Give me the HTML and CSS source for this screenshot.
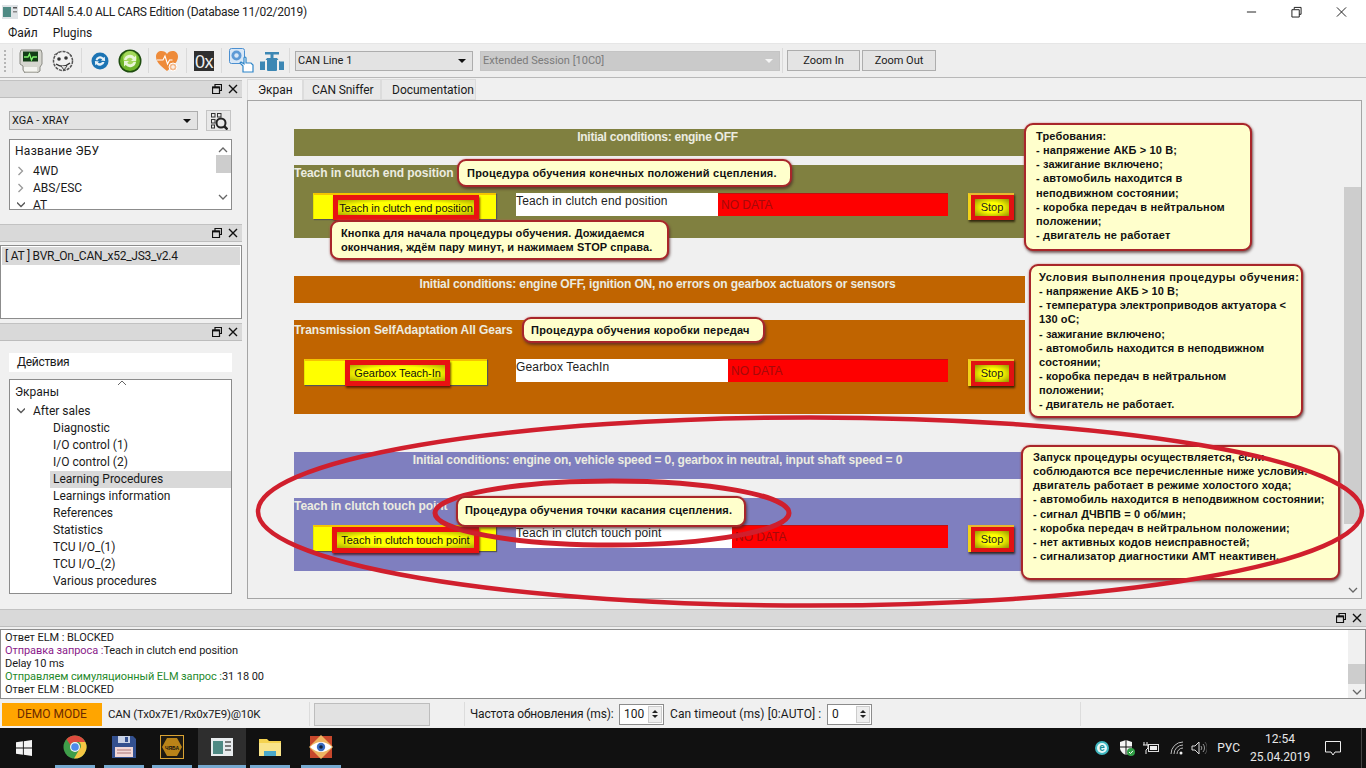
FILE: index.html
```html
<!DOCTYPE html>
<html lang="ru">
<head>
<meta charset="utf-8">
<title>DDT4All</title>
<link rel="stylesheet" href="styles.css">
</head>
<body>
<div class="app">
  <header class="titlebar">
    <svg class="app-icon" viewBox="0 0 16 14" width="16" height="14"><rect width="16" height="14" fill="#dfe3e6"/><rect x="1" y="2" width="8" height="10" fill="#4f8a84"/><rect x="11" y="2" width="4" height="1.5" fill="#555"/><rect x="11" y="6" width="4" height="1.5" fill="#888"/></svg>
    <span class="title-text">DDT4All 5.4.0 ALL CARS Edition (Database 11/02/2019)</span>
    <div class="win-controls">
      <svg viewBox="0 0 12 12" width="12" height="12"><path d="M1 6h10" stroke="#111" fill="none"/></svg>
      <svg viewBox="0 0 12 12" width="12" height="12"><path d="M3.5 3V1h7.500v7.500H9M1 3.500h8v8H1z" stroke="#111" fill="none"/></svg>
      <svg viewBox="0 0 12 12" width="12" height="12"><path d="M1 1l10 10M11 1L1 11" stroke="#111" fill="none"/></svg>
    </div>
  </header>
  <nav class="menubar"><span>Файл</span><span>Plugins</span></nav>

  <div class="toolbar">
    <div class="grip"></div>
    <div class="tsep"></div>
    <svg class="ti ti-monitor" viewBox="0 0 24 24" width="24" height="24"><path d="M2 1h20l1 3v11l-2 3v4l-3 2H6l-2-3v-4L1 15V4z" fill="#d6d6cf" stroke="#8b8b84"/><rect x="4" y="2.500" width="15" height="10" fill="#123d16"/><path d="M5 8h4l1.500-3 2 6 1.500-3h4" fill="none" stroke="#7df06a" stroke-width="1.300"/><rect x="5" y="18" width="13" height="4" fill="#f4f4f0"/></svg>
    <svg class="ti ti-face" viewBox="0 0 24 24" width="24" height="24"><circle cx="12" cy="12" r="9.500" fill="#f1f1f1" stroke="#555" stroke-width="1.500" stroke-dasharray="3 1"/><circle cx="8" cy="10" r="1.800" fill="#333"/><circle cx="15" cy="9" r="1.800" fill="#333"/><path d="M5 15q7 5 14-1" fill="none" stroke="#333" stroke-width="1.500"/><path d="M10 17l3 4 3-4" fill="#ddd" stroke="#444"/><path d="M3 6l5-3M16 3l5 4" stroke="#666"/></svg>
    <div class="tsep tsep-a"></div>
    <svg class="ti ti-sync" viewBox="0 0 18 18" width="18" height="18"><circle cx="9" cy="9" r="8.500" fill="#1c74b4"/><path d="M4.500 8a4.600 4.600 0 0 1 8-2.200l1.300-1.100.3 4.300-4.200-.4 1.300-1.100A2.800 2.800 0 0 0 6.400 8.500zM13.500 10a4.600 4.600 0 0 1-8 2.200l-1.300 1.100-.3-4.300 4.200.4-1.300 1.100a2.800 2.800 0 0 0 4.300-.5z" fill="#e8f2f8"/></svg>
    <svg class="ti ti-green" viewBox="0 0 24 24" width="24" height="24"><circle cx="12" cy="12" r="11.500" fill="#1f4d10"/><circle cx="12" cy="12" r="10" fill="#6fb52a"/><circle cx="12" cy="9" r="7" fill="#a5d85c"/><path d="M6 11a6 6 0 0 1 10.500-3l1.500-1.500V12h-5l1.800-1.800A3.600 3.600 0 0 0 8.500 11zM18 13a6 6 0 0 1-10.500 3L6 17.500V12h5l-1.800 1.800a3.600 3.600 0 0 0 6.300-.8z" fill="#e9f5d8"/></svg>
    <div class="tsep tsep-b"></div>
    <svg class="ti ti-heart" viewBox="0 0 24 22" width="24" height="22"><path d="M12 21C4 15 1 11 1 6.500 1 3 3.500 1 6.500 1 9 1 11 2.300 12 4c1-1.700 3-3 5.500-3C20.500 1 23 3 23 6.500 23 11 20 15 12 21z" fill="#ee8b3a"/><path d="M2 10h6l2-4 2.500 8 2-4h3" fill="none" stroke="#fff" stroke-width="1.100"/><circle cx="18" cy="17" r="4" fill="#f3b98d" stroke="#fff"/><path d="M16 17h4M18 15v4" stroke="#fff"/></svg>
    <div class="tsep tsep-c"></div>
    <div class="hexbtn">0x</div>
    <div class="tsep tsep-d"></div>
    <svg class="ti ti-gear" viewBox="0 0 25 26" width="25" height="26"><rect x="0.500" y="0.500" width="15" height="15" rx="2" fill="#d8e7f6" stroke="#4b8fd0"/><circle cx="7.500" cy="7.500" r="5" fill="#5d9ad6"/><circle cx="7.500" cy="7.500" r="2.200" fill="#d8e7f6"/><path d="M14 24v-6l-3-3 1-1 3 2v-6a1 1 0 0 1 2 0v5h5l2 2v7z" fill="#fff" stroke="#2f86c9" stroke-width="1.200"/></svg>
    <svg class="ti ti-valve" viewBox="0 0 24 22" width="24" height="22"><path d="M5 2h14v2.500h-5.500V8H17l2.500 3.500H24V20h-6l-2 1H8l-2-1H0v-8.500h4.500L7 8h3.500V4.500H5z" fill="#3c87b4"/><rect x="5" y="10" width="2" height="12" fill="#f0f0f0"/><rect x="17" y="10" width="2" height="12" fill="#f0f0f0"/></svg>
    <div class="tsep tsep-e"></div>
    <div class="combo combo-can"><span>CAN Line 1</span><i class="caret"></i></div>
    <div class="combo combo-session"><span>Extended Session [10C0]</span><i class="caret caret-off"></i></div>
    <div class="tsep tsep-f"></div>
    <button class="zoom zoom-in">Zoom In</button>
    <button class="zoom zoom-out">Zoom Out</button>
  </div>

  <div class="main">
    <aside class="left">
      <div class="dock-title first">
        <svg viewBox="0 0 10 10" width="10" height="10"><use href="#float"/></svg>
        <svg viewBox="0 0 10 10" width="10" height="10"><use href="#close"/></svg>
      </div>
      <div class="ecu-row">
        <div class="combo combo-ecu"><span>XGA - XRAY</span><i class="caret"></i></div>
        <div class="scan-btn">
          <svg viewBox="0 0 18 18" width="18" height="18"><g fill="none" stroke="#333"><rect x="1.500" y="1.500" width="3.500" height="3.500"/><rect x="7.500" y="1.500" width="3.500" height="3.500"/><rect x="1.500" y="7.500" width="3.500" height="3.500"/><rect x="1.500" y="13" width="3" height="3"/><circle cx="11" cy="11" r="4.500" stroke-width="2" stroke="#222"/><path d="M14 14l3.500 3.500" stroke-width="2.500" stroke="#222"/></g></svg>
        </div>
      </div>
      <div class="tree tree-ecu">
        <div class="tree-head">Название ЭБУ</div>
        <div class="tree-row"><svg class="chev" viewBox="0 0 8 10" width="8" height="10"><path d="M1.500 1l4 4-4 4" fill="none" stroke="#999" stroke-width="1.300"/></svg>4WD</div>
        <div class="tree-row"><svg class="chev" viewBox="0 0 8 10" width="8" height="10"><path d="M1.500 1l4 4-4 4" fill="none" stroke="#999" stroke-width="1.300"/></svg>ABS/ESC</div>
        <div class="tree-row"><svg class="chev" viewBox="0 0 8 10" width="8" height="10"><path d="M0 2.500l4 4 4-4" fill="none" stroke="#555" stroke-width="1.300"/></svg>AT</div>
        <div class="mini-scroll">
          <svg viewBox="0 0 10 6" width="10" height="6"><path d="M1 5l4-4 4 4" fill="none" stroke="#666" stroke-width="1.300"/></svg>
          <div class="mini-thumb"></div>
          <svg viewBox="0 0 10 6" width="10" height="6"><path d="M1 1l4 4 4-4" fill="none" stroke="#666" stroke-width="1.300"/></svg>
        </div>
      </div>
      <div class="dock-title second">
        <svg viewBox="0 0 10 10" width="10" height="10"><use href="#float"/></svg>
        <svg viewBox="0 0 10 10" width="10" height="10"><use href="#close"/></svg>
      </div>
      <div class="ecu-list"><div class="ecu-sel">[ AT ] BVR_On_CAN_x52_JS3_v2.4</div></div>
      <div class="dock-title third">
        <svg viewBox="0 0 10 10" width="10" height="10"><use href="#float"/></svg>
        <svg viewBox="0 0 10 10" width="10" height="10"><use href="#close"/></svg>
      </div>
      <div class="actions">Действия</div>
      <div class="tree tree-screens">
        <svg class="tree-up" viewBox="0 0 10 6" width="10" height="6"><path d="M1 5l4-4 4 4" fill="none" stroke="#666"/></svg>
        <div class="tree-head">Экраны</div>
        <div class="tree-row"><svg class="chev" viewBox="0 0 8 10" width="8" height="10"><path d="M0 2.500l4 4 4-4" fill="none" stroke="#555" stroke-width="1.300"/></svg>After sales</div>
        <div class="leaf">Diagnostic</div>
        <div class="leaf">I/O control (1)</div>
        <div class="leaf">I/O control (2)</div>
        <div class="leaf selected">Learning Procedures</div>
        <div class="leaf">Learnings information</div>
        <div class="leaf">References</div>
        <div class="leaf">Statistics</div>
        <div class="leaf">TCU I/O_(1)</div>
        <div class="leaf">TCU I/O_(2)</div>
        <div class="leaf">Various procedures</div>
      </div>
    </aside>

    <section class="center">
      <div class="tabs">
        <div class="tab active">Экран</div>
        <div class="tab">CAN Sniffer</div>
        <div class="tab">Documentation</div>
      </div>
      <div class="panel">
        <div class="canvas">
          <div class="band olive b1">Initial conditions: engine OFF</div>
          <div class="block olive k1"><span class="block-label">Teach in clutch end position</span></div>
          <div class="ybtn y1"></div>
          <div class="hl h1"><span>Teach in clutch end position</span></div>
          <div class="field f1">Teach in clutch end position</div>
          <div class="nodata n1">NO DATA</div>
          <div class="stop s1"><span>Stop</span></div>

          <div class="band orange b2">Initial conditions: engine OFF, ignition ON, no errors on gearbox actuators or sensors</div>
          <div class="block orange k2"><span class="block-label">Transmission SelfAdaptation All Gears</span></div>
          <div class="ybtn y2"></div>
          <div class="hl h2"><span>Gearbox Teach-In</span></div>
          <div class="field f2">Gearbox TeachIn</div>
          <div class="nodata n2">NO DATA</div>
          <div class="stop s2"><span>Stop</span></div>

          <div class="band purple b3">Initial conditions: engine on, vehicle speed = 0, gearbox in neutral, input shaft speed = 0</div>
          <div class="block purple k3"><span class="block-label">Teach in clutch touch point</span></div>
          <div class="ybtn y3"></div>
          <div class="hl h3"><span>Teach in clutch touch point</span></div>
          <div class="field f3">Teach in clutch touch point</div>
          <div class="nodata n3">NO DATA</div>
          <div class="stop s3"><span>Stop</span></div>
        </div>
        <div class="vscroll">
          <svg class="vs-down" viewBox="0 0 10 6" width="10" height="6"><path d="M1 1l4 4 4-4" fill="none" stroke="#666" stroke-width="1.300"/></svg>
        </div>
      </div>
    </section>
  </div>

  <div class="logdock">
    <div class="dock-title wide">
      <svg viewBox="0 0 10 10" width="10" height="10"><use href="#float"/></svg>
      <svg viewBox="0 0 10 10" width="10" height="10"><use href="#close"/></svg>
    </div>
    <div class="log">
      <div>Ответ ELM : BLOCKED</div>
      <div><span class="purple-t">Отправка запроса :</span>Teach in clutch end position</div>
      <div>Delay 10 ms</div>
      <div><span class="green-t">Отправляем симуляционный ELM запрос :</span>31 18 00</div>
      <div>Ответ ELM : BLOCKED</div>
      <div class="log-scroll">
        <div class="log-thumb"></div>
        <svg viewBox="0 0 10 6" width="10" height="6"><path d="M1 1l4 4 4-4" fill="none" stroke="#666" stroke-width="1.300"/></svg>
      </div>
    </div>
  </div>

  <div class="statusbar">
    <div class="demo">DEMO MODE</div>
    <div class="can-info">CAN (Tx0x7E1/Rx0x7E9)@10K</div>
    <div class="sep sep-a"></div>
    <div class="progress"></div>
    <div class="sep sep-b"></div>
    <span class="st-label">Частота обновления (ms):</span>
    <div class="spin"><span>100</span><div class="spin-btn"><i class="up"></i><i class="down"></i></div></div>
    <span class="st-label st-b">Can timeout (ms) [0:AUTO] :</span>
    <div class="spin"><span>0</span><div class="spin-btn"><i class="up"></i><i class="down"></i></div></div>
    <div class="sep sep-c"></div>
  </div>

  <footer class="taskbar">
    <svg class="winlogo" viewBox="0 0 16 16" width="16" height="16"><path d="M0 2.300l6.900-1v6.300H0zM7.800 1.200L16 0v7.600H7.800zM0 8.400h6.900v6.300l-6.900-1zM7.800 8.400H16V16l-8.200-1.200z" fill="#f4f4f4"/></svg>
    <div class="task t-chrome"><svg viewBox="0 0 24 24" width="24" height="24"><circle cx="12" cy="12" r="11.500" fill="#3f9e4a"/><path d="M12 .5A11.500 11.500 0 0 1 22.300 7H12a5 5 0 0 0-4.600 3L3.500 4.200A11.500 11.500 0 0 1 12 .5z" fill="#dd4b3e"/><path d="M22.300 7A11.500 11.500 0 0 1 11 23.500l5-8.500a5 5 0 0 0 0-8z" fill="#f6c644"/><circle cx="12" cy="12" r="5" fill="#f4f4f4"/><circle cx="12" cy="12" r="3.800" fill="#4b8bea"/></svg></div>
    <div class="task t-floppy"><svg viewBox="0 0 24 24" width="24" height="24"><path d="M0 1h21l3 3v19H0z" fill="#33508f"/><rect x="6" y="1" width="12" height="7" fill="#c8d2e6"/><rect x="13" y="2" width="3" height="5" fill="#33508f"/><rect x="3" y="12" width="18" height="10" fill="#f1d8d8"/><path d="M5 15h14M5 18h14" stroke="#a77"/></svg></div>
    <div class="task t-ecu"><svg viewBox="0 0 24 24" width="24" height="24"><rect x="0.500" y="0.500" width="23" height="23" fill="#1e1a12" stroke="#d8a233"/><path d="M7 3h10l5 9-5 9H7l-5-9z" fill="#b98318"/><text x="12" y="15" class="ecu-t">ЧЯБА</text></svg></div>
    <div class="task t-active"><svg viewBox="0 0 22 18" width="22" height="18"><rect width="22" height="18" fill="#e8ecee"/><rect x="2" y="3" width="10" height="13" fill="#4f8a84"/><path d="M14 4h6M14 8h6M14 12h6" stroke="#555" stroke-width="1.500"/></svg></div>
    <div class="task t-folder"><svg viewBox="0 0 22 18" width="22" height="18"><path d="M0 1h8l2 2h12v15H0z" fill="#f4d24f"/><path d="M0 5h22v13H0z" fill="#f9e48a"/><path d="M5 18v-5h12v5" fill="#4aa8c9"/></svg></div>
    <div class="task t-eye"><svg viewBox="0 0 24 24" width="24" height="24"><rect x="1" y="1" width="22" height="22" fill="#c8482c"/><path d="M12 0l12 12-12 12L0 12z" fill="#efb562"/><path d="M1 12q11-10 22 0-11 10-22 0z" fill="#fff"/><circle cx="12" cy="12" r="4.200" fill="#3a6cc0"/><circle cx="12" cy="12" r="1.800" fill="#123"/></svg></div>
    <div class="tray">
      <svg class="tr-eset" viewBox="0 0 14 14" width="14" height="14"><circle cx="7" cy="7" r="7" fill="#3fb7c0"/><circle cx="7" cy="7" r="5" fill="#e6f8f8"/><text x="7" y="10" class="eset-t">e</text></svg>
      <svg class="tr-shield" viewBox="0 0 16 16" width="16" height="16"><path d="M1 2l6-2 6 2v6c0 3-3 6-6 7-3-1-6-4-6-7z" fill="#f4f4f4"/><path d="M7 0v15M1 7h12" stroke="#111"/><circle cx="12" cy="12" r="4" fill="#2f9e44"/><path d="M10 12l1.500 1.500L14 10.800" stroke="#fff" fill="none"/></svg>
      <svg class="tr-batt" viewBox="0 0 18 12" width="18" height="12"><path d="M2 0v3M5 0v3M1 3h5v3L4 8v4" stroke="#eee" fill="none"/><rect x="6.500" y="2.500" width="10" height="7" stroke="#ddd" fill="none"/><rect x="8" y="4" width="7" height="4" fill="#eee"/></svg>
      <svg class="tr-wifi" viewBox="0 0 14 14" width="14" height="14"><g fill="none" stroke="#bbb"><path d="M1 13A12 12 0 0 1 13 1"/><path d="M4 13a9 9 0 0 1 9-9"/><path d="M7 13a6 6 0 0 1 6-6"/></g><circle cx="11" cy="12" r="1.500" fill="#eee"/></svg>
      <svg class="tr-vol" viewBox="0 0 16 14" width="16" height="14"><path d="M1 5h3l4-4v12L4 9H1z" fill="none" stroke="#ddd"/><path d="M10 5a3 3 0 0 1 0 4M12 3a6 6 0 0 1 0 8" fill="none" stroke="#999"/><path d="M14 1a9 9 0 0 1 0 12" fill="none" stroke="#555"/></svg>
      <span class="lang">РУС</span>
      <div class="clock"><div>12:54</div><div>25.04.2019</div></div>
      <svg class="tr-note" viewBox="0 0 16 15" width="16" height="15"><path d="M0.500 0.500h15v10.500H10l-2 3-2-3H0.500z" fill="none" stroke="#eee"/></svg>
    </div>
  </footer>

  <div class="annot">
    <svg class="ring-layer" viewBox="0 0 1366 768" width="1366" height="768"><ellipse cx="612" cy="513" rx="177" ry="32" fill="none" stroke="#d01f2d" stroke-width="5"/></svg>
    <div class="note c1">Процедура обучения конечных положений сцепления.</div>
    <div class="note c2">Кнопка для начала процедуры обучения. Дожидаемся<br>окончания, ждём пару минут, и нажимаем STOP справа.</div>
    <div class="note c3">Требования:<br>- напряжение АКБ &gt; 10 В;<br>- зажигание включено;<br>- автомобиль находится в<br>неподвижном состоянии;<br>- коробка передач в нейтральном<br>положении;<br>- двигатель не работает</div>
    <div class="note c4"><span class="c4-head">Условия выполнения процедуры обучения:</span><br>- напряжение АКБ &gt; 10 В;<br>- температура электроприводов актуатора &lt;<br>130 оС;<br>- зажигание включено;<br>- автомобиль находится в неподвижном<br>состоянии;<br>- коробка передач в нейтральном<br>положении;<br>- двигатель не работает.</div>
    <div class="note c5">Запуск процедуры осуществляется, если<br>соблюдаются все перечисленные ниже условия:<br>двигатель работает в режиме холостого хода;<br>- автомобиль находится в неподвижном состоянии;<br>- сигнал ДЧВПВ = 0 об/мин;<br>- коробка передач в нейтральном положении;<br>- нет активных кодов неисправностей;<br>- сигнализатор диагностики АМТ неактивен.</div>
    <div class="note c6">Процедура обучения коробки передач</div>
    <div class="note c7">Процедура обучения точки касания сцепления.</div>
    <svg class="ring-layer" viewBox="0 0 1366 768" width="1366" height="768"><ellipse cx="810" cy="511.500" rx="552" ry="94" fill="none" stroke="#d01f2d" stroke-width="4.500"/></svg>
  </div>

  <svg class="defs" width="0" height="0">
    <symbol id="float" viewBox="0 0 10 10"><path d="M3 2.500V.5h6.500v6H8M.5 3h7v6.500h-7z" fill="none" stroke="#111" stroke-width="1.200"/><path d="M.5 3.500h7" stroke="#111" stroke-width="1.800"/></symbol>
    <symbol id="close" viewBox="0 0 10 10"><path d="M1 1l8 8M9 1L1 9" stroke="#111" stroke-width="1.400"/></symbol>
  </svg>
</div>
</body>
</html>
```
FILE: styles.css
```css
* { box-sizing: border-box; }
html, body { margin: 0; padding: 0; }
body { width: 1366px; height: 768px; overflow: hidden; background: #f0f0f0; font: 12px/16px Roboto, "Liberation Sans", sans-serif; color: #1a1a1a; }
.app { position: relative; width: 1366px; height: 768px; display: flex; flex-direction: column; }

.titlebar { height: 22px; flex: none; background: #fff; display: flex; align-items: center; padding: 1px 0 0 2px; }
.app-icon { margin-right: 5px; }
.title-text { font-size: 12px; letter-spacing: -0.270px; color: #222; }
.win-controls { margin-left: auto; display: flex; gap: 34px; padding-right: 19px; width: 120px; justify-content: flex-end; }
.menubar { height: 21px; flex: none; background: #fff; display: flex; gap: 15px; padding: 3px 0 0 8px; font-size: 12px; }

.toolbar { height: 35px; flex: none; background: #eee; border-top: 1px solid #e6e6e6; border-bottom: 1px solid #b8b8b8; display: flex; align-items: center; padding-left: 4px; position: relative; }
.grip { width: 2px; height: 22px; border-left: 2px dotted #b5b5b5; margin-right: 6px; }
.tsep { width: 1px; height: 25px; background: #dadada; flex: none; }
.ti { flex: none; }
.ti-monitor { margin-left: 6px; }
.ti-face { margin-left: 8px; }
.tsep-a { margin-left: 6px; }
.ti-sync { margin-left: 9px; }
.ti-green { margin-left: 9px; }
.tsep-b { margin-left: 6px; }
.ti-heart { margin-left: 6px; }
.tsep-c { margin-left: 7px; }
.hexbtn { width: 20px; height: 20px; margin-left: 7px; background: #2f2f2f; color: #eee; font: 18px/17px "Liberation Sans", sans-serif; flex: none; text-align: center; padding-top: 3px; letter-spacing: -0.500px; }
.tsep-d { margin-left: 7px; }
.ti-gear { margin-left: 7px; }
.ti-valve { margin-left: 6px; }
.tsep-e { margin-left: 5px; }
.combo { height: 20px; display: flex; align-items: center; justify-content: space-between; background: #e3e3e3; border: 1px solid #adadad; padding: 0 6px 0 2px; font-size: 11px; flex: none; }
.combo-can { width: 178px; margin-left: 5px; }
.combo-session { width: 300px; margin-left: 7px; background: #cacaca; border-color: #c4c4c4; color: #7b7b7b; }
.caret { width: 0; height: 0; border-left: 4px solid transparent; border-right: 4px solid transparent; border-top: 4px solid #111; }
.caret-off { border-top-color: #f5f5f5; }
.tsep-f { margin-left: 2px; }
.zoom { height: 21px; width: 73px; margin-left: 4px; background: #e4e4e4; border: 1px solid #adadad; font: 11px Roboto, sans-serif; color: #1a1a1a; padding: 0; flex: none; }
.zoom-out { margin-left: 2px; width: 74px; }

.main { height: 527px; flex: none; display: flex; }
.left { width: 242px; flex: none; display: flex; flex-direction: column; }
.dock-title { height: 18px; flex: none; background: #d9d9d9; border-top: 1px solid #c2c2c2; border-bottom: 1px solid #bdbdbd; display: flex; align-items: center; justify-content: flex-end; gap: 6px; padding-right: 4px; }
.dock-title.first { margin-top: 2px; }
.dock-title.second { margin-top: 14px; }
.dock-title.third { margin-top: 4px; }
.ecu-row { display: flex; align-items: center; gap: 8px; margin: 12px 0 0 9px; height: 21px; }
.combo-ecu { width: 189px; height: 19px; }
.scan-btn { width: 25px; height: 21px; background: #e8e8e8; border: 1px solid #c4c4c4; display: flex; align-items: center; justify-content: center; }
.tree { position: relative; background: #fff; border: 1px solid #8c8c8c; margin-left: 9px; width: 223px; overflow: hidden; flex: none; }
.tree-ecu { height: 71px; margin-top: 8px; padding-top: 2px; }
.tree-ecu .tree-head { height: 21px; letter-spacing: 0.300px; }
.tree-head { padding-left: 5px; height: 20px; line-height: 18px; }
.tree-row { height: 17px; line-height: 17px; padding-left: 23px; position: relative; }
.chev { position: absolute; left: 7px; top: 3px; }
.mini-scroll { position: absolute; right: 0; top: 0; bottom: 0; width: 16px; background: #fff; display: flex; flex-direction: column; align-items: center; padding-top: 7px; }
.mini-thumb { width: 15px; height: 18px; background: #cdcdcd; margin: 2px 0 21px; }
.ecu-list { height: 74px; flex: none; margin-top: 3px; background: #fff; border: 1px solid #8c8c8c; padding: 1px; width: 242px; }
.ecu-sel { height: 18px; line-height: 18px; background: #d9d9d9; padding-left: 3px; letter-spacing: -0.250px; }
.actions { width: 223px; height: 19px; background: #fff; margin: 12px 0 0 9px; line-height: 19px; padding-left: 8px; flex: none; letter-spacing: -0.300px; }
.tree-screens { height: 215px; margin-top: 7px; padding-top: 3px; }
.tree-up { position: absolute; left: 107px; top: 0; }
.leaf { height: 17px; line-height: 17px; padding-left: 43px; }
.leaf.selected { margin-left: 40px; padding-left: 3px; background: #d9d9d9; }

.center { flex: 1; display: flex; flex-direction: column; margin-left: 5px; min-width: 0; margin-right: 4px; }
.tabs { height: 22px; flex: none; display: flex; padding-top: 1px; }
.tab { background: #e9e9e9; border: 1px solid #dcdcdc; height: 21px; line-height: 21px; padding: 0 10px; white-space: nowrap; }
.tab:nth-child(2) { width: 78px; padding: 0 8px; letter-spacing: -0.100px; }
.tab:nth-child(3) { width: 95px; }
.tab.active { background: #f2f2f2; width: 56px; text-align: center; border-bottom: none; }
.panel { flex: none; height: 499px; border: 1px solid #a5a5a5; display: flex; background: #f0f0f0; }
.canvas { position: relative; flex: 1; overflow: hidden; }
.vscroll { width: 17px; flex: none; background: #f0f0f0; position: relative; }
.vscroll::before { content: ""; position: absolute; left: 0; right: 0; top: 86px; height: 337px; background: #cdcdcd; }
.vs-down { position: absolute; left: 4px; bottom: 5px; }

.band, .block { position: absolute; font: bold 12px/14px "Liberation Sans", Arial, sans-serif; color: #ecece0; }
.band { left: 46px; width: 731px; height: 27px; text-align: center; padding: 1px 4px 0 0; letter-spacing: -0.140px; }
.band.b1 { letter-spacing: -0.270px; }
.block { left: 46px; width: 731px; }
.block-label { display: block; margin-top: 1px; letter-spacing: -0.060px; }
.olive { background: #808040; }
.orange { background: #c06400; }
.purple { background: #7f7fbf; }
.b1 { top: 28px; } .k1 { top: 64px; height: 73px; }
.b2 { top: 175px; } .k2 { top: 219px; height: 94px; padding-top: 2px; }
.b3 { top: 351px; } .k3 { top: 397px; height: 73px; }

.ybtn { position: absolute; width: 183px; height: 26px; background: #ff0; border-top: 2px solid #f5c400; border-left: 1px solid #e6e600; box-shadow: 1px 1px 1px #555; }
.y1 { left: 65px; top: 92px; } .y2 { left: 56px; top: 258px; } .y3 { left: 65px; top: 424px; }
.hl { position: absolute; border: 5px solid #e81212; background: radial-gradient(ellipse at center, #ff0 55%, #7a7a00 125%); box-shadow: 1px 2px 2px rgba(60,0,0,.7); display: flex; align-items: center; justify-content: center; font: 11px/14px "Liberation Sans", Arial, sans-serif; color: #111; white-space: nowrap; letter-spacing: -0.050px; }
.h1 { left: 85px; top: 94px; width: 146px; height: 25px; }
.h2 { left: 97px; top: 259px; width: 105px; height: 26px; }
.h3 { left: 84px; top: 426px; width: 147px; height: 26px; }
.field { position: absolute; left: 268px; height: 23px; background: #fff; font: 12px/17px "Liberation Sans", Arial, sans-serif; color: #222; white-space: nowrap; letter-spacing: 0.150px; }
.f1 { top: 92px; width: 202px; } .f2 { top: 258px; width: 212px; } .f3 { top: 424px; width: 216px; }
.nodata { position: absolute; height: 23px; background: #fe0000; font: 12px/24px "Liberation Sans", Arial, sans-serif; color: #a50a0a; padding-left: 3px; box-shadow: inset 0 1px 0 #c01010; }
.n1 { left: 470px; width: 230px; top: 92px; } .n2 { left: 480px; width: 220px; top: 258px; } .n3 { left: 484px; width: 216px; top: 424px; }
.stop { position: absolute; left: 720px; width: 46px; height: 27px; background: #e01212; border-left: 3px solid #f2d21a; border-top: 2px solid #e8b830; box-shadow: 1px 2px 2px rgba(30,20,0,.8); padding: 4px 5px 4px 4px; }
.stop span { display: block; height: 100%; background: radial-gradient(ellipse at center, #ff0 40%, #6d6d00 120%); font: 11px/17px "Liberation Sans", Arial, sans-serif; color: #222; text-align: center; }
.s1 { top: 92px; } .s2 { top: 258px; } .s3 { top: 424px; }

.logdock { height: 94px; flex: none; display: flex; flex-direction: column; padding-top: 4px; }
.log { position: relative; height: 70px; margin-top: 2px; background: #fff; border: 1px solid #8c8c8c; padding: 1px 0 0 4px; font-size: 11px; line-height: 13px; letter-spacing: -0.080px; }
.purple-t { color: #8a1a8a; }
.green-t { color: #1f8a2c; }
.log-scroll { position: absolute; right: 0; top: 0; bottom: 0; width: 17px; background: #f0f0f0; display: flex; flex-direction: column; align-items: center; justify-content: flex-end; padding-bottom: 3px; }
.log-thumb { width: 17px; height: 20px; background: #cdcdcd; margin-bottom: 5px; }

.statusbar { height: 29px; flex: none; background: #f0f0f0; display: flex; align-items: center; padding-top: 1px; }
.demo { width: 100px; height: 23px; margin-left: 2px; background: #ffa500; color: #6b2a00; text-align: center; line-height: 23px; }
.can-info { margin-left: 6px; width: 198px; font-size: 11.500px; letter-spacing: -0.200px; white-space: nowrap; }
.sep { width: 1px; height: 24px; background: #dcdcdc; }
.progress { width: 116px; height: 23px; margin-left: 4px; background: #e2e2e2; border: 1px solid #bdbdbd; }
.sep-a { margin-left: 3px; }
.sep-b { margin-left: 34px; }
.st-label { margin-left: 5px; width: 149px; white-space: nowrap; letter-spacing: -0.150px; }
.st-label.st-b { margin-left: 6px; width: 157px; letter-spacing: 0.100px; }
.spin { width: 45px; height: 21px; background: #fff; border: 1px solid #8c8c8c; display: flex; justify-content: space-between; align-items: center; padding: 0 1px 0 4px; }
.spin-btn { width: 14px; height: 17px; background: #eee; border: 1px solid #ccc; display: flex; flex-direction: column; align-items: center; justify-content: center; gap: 2px; }
.spin-btn i { width: 0; height: 0; border-left: 3px solid transparent; border-right: 3px solid transparent; }
.spin-btn .up { border-bottom: 3px solid #222; }
.spin-btn .down { border-top: 3px solid #222; }
.sep-c { margin-left: 208px; }

.taskbar { height: 40px; flex: none; background: #111; position: relative; display: flex; align-items: center; color: #e8e8e8; }
.winlogo { margin-left: 16px; flex: none; }
.task { width: 40px; height: 40px; display: flex; align-items: center; justify-content: center; border-bottom: 3px solid #76a9d0; flex: none; }
.t-chrome { margin-left: 23px; }
.t-floppy { margin-left: 9px; }
.t-ecu { margin-left: 8px; }
.t-active { margin-left: 6px; width: 48px; background: #2e2e2e; }
.t-folder { margin-left: 4px; }
.t-eye { margin-left: 11px; }
.ecu-t { font: bold 5px "Liberation Sans", sans-serif; fill: #111; text-anchor: middle; }
.eset-t { font: bold 10px "Liberation Sans", sans-serif; fill: #1a8d96; text-anchor: middle; }
.tray { margin-left: auto; display: flex; align-items: center; height: 40px; padding-right: 20px; border-right: 1px solid #444; margin-right: 4px; }
.tr-shield { margin-left: 10px; }
.tr-batt { margin-left: 7px; }
.tr-wifi { margin-left: 10px; }
.tr-vol { margin-left: 7px; }
.lang { margin-left: 10px; font-size: 12px; }
.clock { margin-left: 10px; width: 60px; text-align: center; line-height: 18px; font-size: 12px; }
.tr-note { margin-left: 15px; }

.annot { position: absolute; inset: 0; pointer-events: none; }
.ring-layer { position: absolute; left: 0; top: 0; }
.note { position: absolute; background: #ffffcc; border: 2px solid #a8262a; border-radius: 9px; box-shadow: 1px 2px 3px rgba(60,30,30,.65), 0 0 2px rgba(220,100,100,.7); font: bold 11px/14.150px "Liberation Sans", Arial, sans-serif; color: #111; white-space: nowrap; }
.c1 { left: 457px; top: 159px; width: 335px; height: 28px; padding: 5px 0 0 8px; letter-spacing: 0.220px; }
.c2 { left: 330px; top: 220px; width: 339px; height: 40px; padding: 4px 0 0 9px; letter-spacing: 0.120px; }
.c3 { left: 1024px; top: 123px; width: 228px; height: 128px; padding: 4px 0 0 10px; letter-spacing: 0.150px; }
.c4 { left: 1029px; top: 264px; width: 274px; height: 154px; padding: 4px 0 0 8px; letter-spacing: 0.100px; }
.c4-head { letter-spacing: 0.500px; }
.c5 { left: 1021px; top: 445px; width: 319px; height: 135px; padding: 3px 0 0 10px; letter-spacing: 0.130px; }
.c6 { left: 522px; top: 317px; width: 243px; height: 26px; padding: 4px 0 0 7px; letter-spacing: 0.240px; }
.c7 { left: 456px; top: 496px; width: 290px; height: 31px; padding: 5px 0 0 7px; letter-spacing: 0.170px; }
.defs { position: absolute; }
```
